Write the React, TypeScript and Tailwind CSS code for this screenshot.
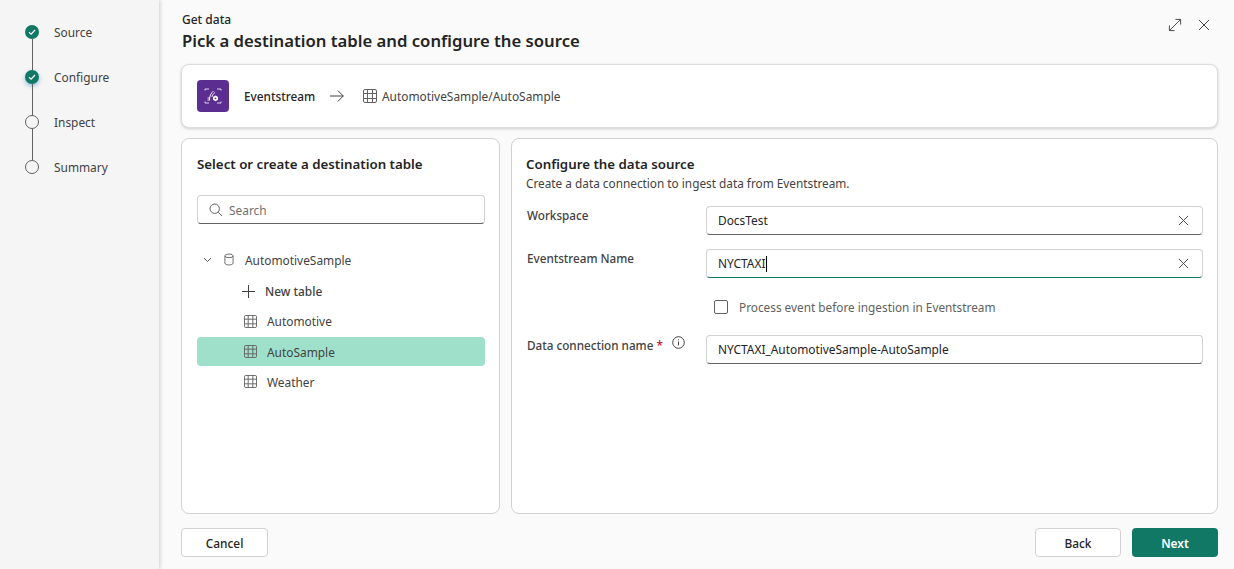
import React from "react";

const Grid = ({ className = "", size = 13 }: { className?: string; size?: number }) => (
  <svg width={size} height={size} viewBox="0 0 14 14" fill="none" stroke="#616161" strokeWidth="1" className={className}>
    <rect x="0.5" y="0.5" width="13" height="13" rx="1.5" />
    <path d="M0.5 4.5H13.5M0.5 9.5H13.5M4.5 0.5V13.5M9.5 0.5V13.5" />
  </svg>
);

const Close = ({ size = 12 }: { size?: number }) => (
  <svg width={size} height={size} viewBox="0 0 12 12" fill="none" stroke="#424242" strokeWidth="1">
    <path d="M1 1L11 11M11 1L1 11" />
  </svg>
);

const Check = () => (
  <svg width="10" height="10" viewBox="0 0 10 10" fill="none" stroke="#fff" strokeWidth="1.2">
    <path d="M2 5.3L4.1 7.2L8 3" />
  </svg>
);

const Step = ({ label, done, glow, last }: { label: string; done?: boolean; glow?: boolean; last?: boolean }) => (
  <div className="flex h-[45px] gap-[15px]">
    <div className="flex w-[14px] flex-col items-center">
      <div
        className={
          done
            ? `flex h-[14px] w-[14px] shrink-0 items-center justify-center rounded-full bg-[#117865] ${glow ? "shadow-[0_2px_4px_rgba(40,130,200,0.5)]" : ""}`
            : "h-[14px] w-[14px] shrink-0 rounded-full border border-[#616161] bg-[#f5f5f5]"
        }
      >
        {done && <Check />}
      </div>
      {!last && <div className="w-px flex-1 bg-[#616161]" />}
    </div>
    <span className="text-[11.9px] leading-[14px] text-[#424242]">{label}</span>
  </div>
);

const Field = ({ value, focused, clear = true, caret }: { value: string; focused?: boolean; clear?: boolean; caret?: boolean }) => (
  <div
    className={`flex h-[29px] w-[497px] items-center justify-between rounded border border-[#d1d1d1] bg-white pl-[11px] pr-[13px] ${focused ? "border-b-[#117865]" : "border-b-[#616161]"}`}
  >
    <span className="flex items-center pt-px text-[11.9px] text-[#242424]">
      {value}
      {caret && <span className="ml-px inline-block h-[16px] w-px bg-black" />}
    </span>
    {clear && <Close size={11} />}
  </div>
);

const TreeRow = ({ label, selected, tall }: { label: string; selected?: boolean; tall?: boolean }) => (
  <div className={`flex items-center gap-[10px] rounded pl-[47px] text-[11.9px] text-[#424242] ${tall ? "h-[30px]" : "h-[29px]"} ${selected ? "bg-[#9fe0ca]" : ""}`}>
    <Grid />
    <span className={tall ? "pt-px" : "pt-[3px]"}>{label}</span>
  </div>
);

export default function App() {
  return (
    <div className="flex h-[569px] w-[1234px] overflow-hidden bg-[#fafafa] font-['Noto_Sans','Open_Sans',sans-serif]">
      <aside className="z-10 h-full w-[159px] shrink-0 bg-[#f5f5f5] pl-[25px] pt-[25px] shadow-[1px_0_4px_rgba(0,0,0,0.18)]">
        <Step label="Source" done />
        <Step label="Configure" done glow />
        <Step label="Inspect" />
        <Step label="Summary" last />
      </aside>

      <main className="flex min-w-0 flex-1 flex-col pl-[22px] pr-4">
        <header className="flex h-[64px] shrink-0 items-start justify-between pt-[12px]">
          <div className="pl-px">
            <div className="text-[12px] font-medium leading-[15px] text-[#242424]">Get data</div>
            <h1 className="mt-[3px] text-[16.7px] font-semibold leading-[22px] text-[#242424]">Pick a destination table and configure the source</h1>
          </div>
          <div className="mr-[8px] mt-[6px] flex items-center gap-[16px]">
            <svg width="14" height="14" viewBox="0 0 15 15" fill="none" stroke="#424242" strokeWidth="1">
              <path d="M1.500 13.500L13.500 1.500M8 1.500H13.500V7M1.500 8V13.500H7" />
            </svg>
            <Close size={12} />
          </div>
        </header>

        <section className="flex h-[64px] shrink-0 items-center rounded-lg border border-[#dcdcdc] bg-white pl-[15px] shadow-[0_1px_3px_rgba(0,0,0,0.18)]">
          <div className="flex h-[32px] w-[32px] items-center justify-center rounded bg-[#5c2d91]">
            <svg width="18" height="16" viewBox="0 0 18 16" fill="none" stroke="#fff">
              <path d="M1 2.500V1H5M13 1H17V2.500M1 13.500V15H5M13 15H17V13.500" strokeWidth="0.8" />
              <path d="M5.500 12C5.500 8 7 5 9.500 3M8 9C8 7.500 9 6 11 4.500M3.500 10H6M3.500 12H6" strokeWidth="0.9" />
              <path d="M11.500 7.500L14 9V11.800L11.500 13.200L9 11.800V9Z" fill="#fff" stroke="none" />
              <circle cx="11.500" cy="10.300" r="0.900" fill="#5c2d91" stroke="none" />
            </svg>
          </div>
          <span className="ml-[15px] w-[70px] whitespace-nowrap pt-px text-[11.8px] font-medium text-[#242424]">Eventstream</span>
          <svg width="14" height="12" viewBox="0 0 14 12" fill="none" stroke="#424242" strokeWidth="1" className="ml-[16px]">
            <path d="M0 6H13.300M8 0.700L13.300 6L8 11.300" />
          </svg>
          <Grid className="ml-[19px]" size={14} />
          <span className="ml-[5px] pt-px text-[11.9px] text-[#424242]">AutomotiveSample/AutoSample</span>
        </section>

        <div className="mt-[10px] flex h-[376px] shrink-0 gap-[11px]">
          <section className="flex w-[319px] shrink-0 flex-col rounded-lg border border-[#d1d1d1] bg-white pl-[15px] pr-[14px] pt-[16px]">
            <h2 className="text-[13.3px] font-semibold leading-[18px] text-[#242424]">Select or create a destination table</h2>
            <div className="mt-[22px] flex h-[29px] items-center gap-[6px] rounded border border-[#d1d1d1] border-b-[#616161] bg-white pl-[11px]">
              <svg width="14" height="14" viewBox="0 0 14 14" fill="none" stroke="#616161" strokeWidth="1">
                <circle cx="5.700" cy="5.700" r="4.700" />
                <path d="M9.200 9.200L13 13" />
              </svg>
              <span className="pt-[2px] text-[11.9px] text-[#707070]">Search</span>
            </div>
            <div className="mt-[21px] flex h-[29px] items-center text-[11.9px] text-[#424242]">
              <svg width="9" height="6" viewBox="0 0 9 6" fill="none" stroke="#616161" strokeWidth="1" className="ml-[6px]">
                <path d="M1 1L4.500 4.500L8 1" />
              </svg>
              <svg width="10" height="13" viewBox="0 0 11 14" fill="none" stroke="#616161" strokeWidth="1" className="ml-[12px]">
                <path d="M1 3V11C1 12.200 3 13 5.500 13C8 13 10 12.200 10 11V3" />
                <ellipse cx="5.500" cy="3" rx="4.500" ry="2" />
              </svg>
              <span className="ml-[11px] pt-[2px]">AutomotiveSample</span>
            </div>
            <div className="mt-[2px] flex h-[30px] items-center gap-[10px] pl-[45px] text-[11.9px] font-medium text-[#424242]">
              <svg width="13" height="13" viewBox="0 0 13 13" fill="none" stroke="#424242" strokeWidth="1">
                <path d="M6.500 0V13M0 6.500H13" />
              </svg>
              <span className="pt-px">New table</span>
            </div>
            <div className="flex flex-col gap-px">
              <TreeRow label="Automotive" tall />
              <TreeRow label="AutoSample" selected />
              <TreeRow label="Weather" />
            </div>
          </section>

          <section className="flex min-w-0 flex-1 flex-col rounded-lg border border-[#d1d1d1] bg-white pl-[14px] pr-[14px] pt-[16px]">
            <h2 className="text-[13.3px] font-semibold leading-[18px] text-[#242424]">Configure the data source</h2>
            <p className="mt-[2px] text-[11.8px] leading-[16px] text-[#424242]">Create a data connection to ingest data from Eventstream.</p>
            <div className="mt-[15px] flex h-[43px] justify-between">
              <label className="pl-px pt-px text-[11.7px] font-medium leading-[16px] text-[#424242]">Workspace</label>
              <Field value="DocsTest" />
            </div>
            <div className="flex h-[43px] justify-between">
              <label className="pl-px pt-px text-[11.7px] font-medium leading-[16px] text-[#424242]">Eventstream Name</label>
              <Field value="NYCTAXI" focused caret />
            </div>
            <div className="ml-[188px] flex h-[30px] items-center gap-[11px]">
              <span className="h-[14px] w-[14px] shrink-0 rounded-[2px] border border-[#616161] bg-white" />
              <span className="pt-px text-[11.8px] text-[#616161]">Process event before ingestion in Eventstream</span>
            </div>
            <div className="mt-[13px] flex justify-between">
              <label className="flex items-start gap-[9px] pl-px pt-[2px] text-[11.7px] font-medium leading-[16px] text-[#424242]">
                <span>
                  Data connection name <span className="text-[#c50f1f]">*</span>
                </span>
                <svg width="13" height="13" viewBox="0 0 13 13" fill="none" stroke="#424242" strokeWidth="1" className="-mt-[1px]">
                  <circle cx="6.500" cy="6.500" r="5.800" />
                  <path d="M6.500 5.500V9.500M6.500 3.300V4.300" />
                </svg>
              </label>
              <Field value="NYCTAXI_AutomotiveSample-AutoSample" clear={false} />
            </div>
          </section>
        </div>

        <footer className="mt-[14px] flex shrink-0 items-center justify-between">
          <button className="h-[29px] w-[87px] rounded border border-[#d1d1d1] bg-white pt-[3px] text-[11.9px] font-medium text-[#242424]">Cancel</button>
          <div className="flex gap-[11px]">
            <button className="h-[29px] w-[86px] rounded border border-[#d1d1d1] bg-white pt-[3px] text-[11.9px] font-medium text-[#242424]">Back</button>
            <button className="h-[29px] w-[86px] rounded bg-[#117865] pt-[3px] text-[11.9px] font-semibold text-white">Next</button>
          </div>
        </footer>
      </main>
    </div>
  );
}
